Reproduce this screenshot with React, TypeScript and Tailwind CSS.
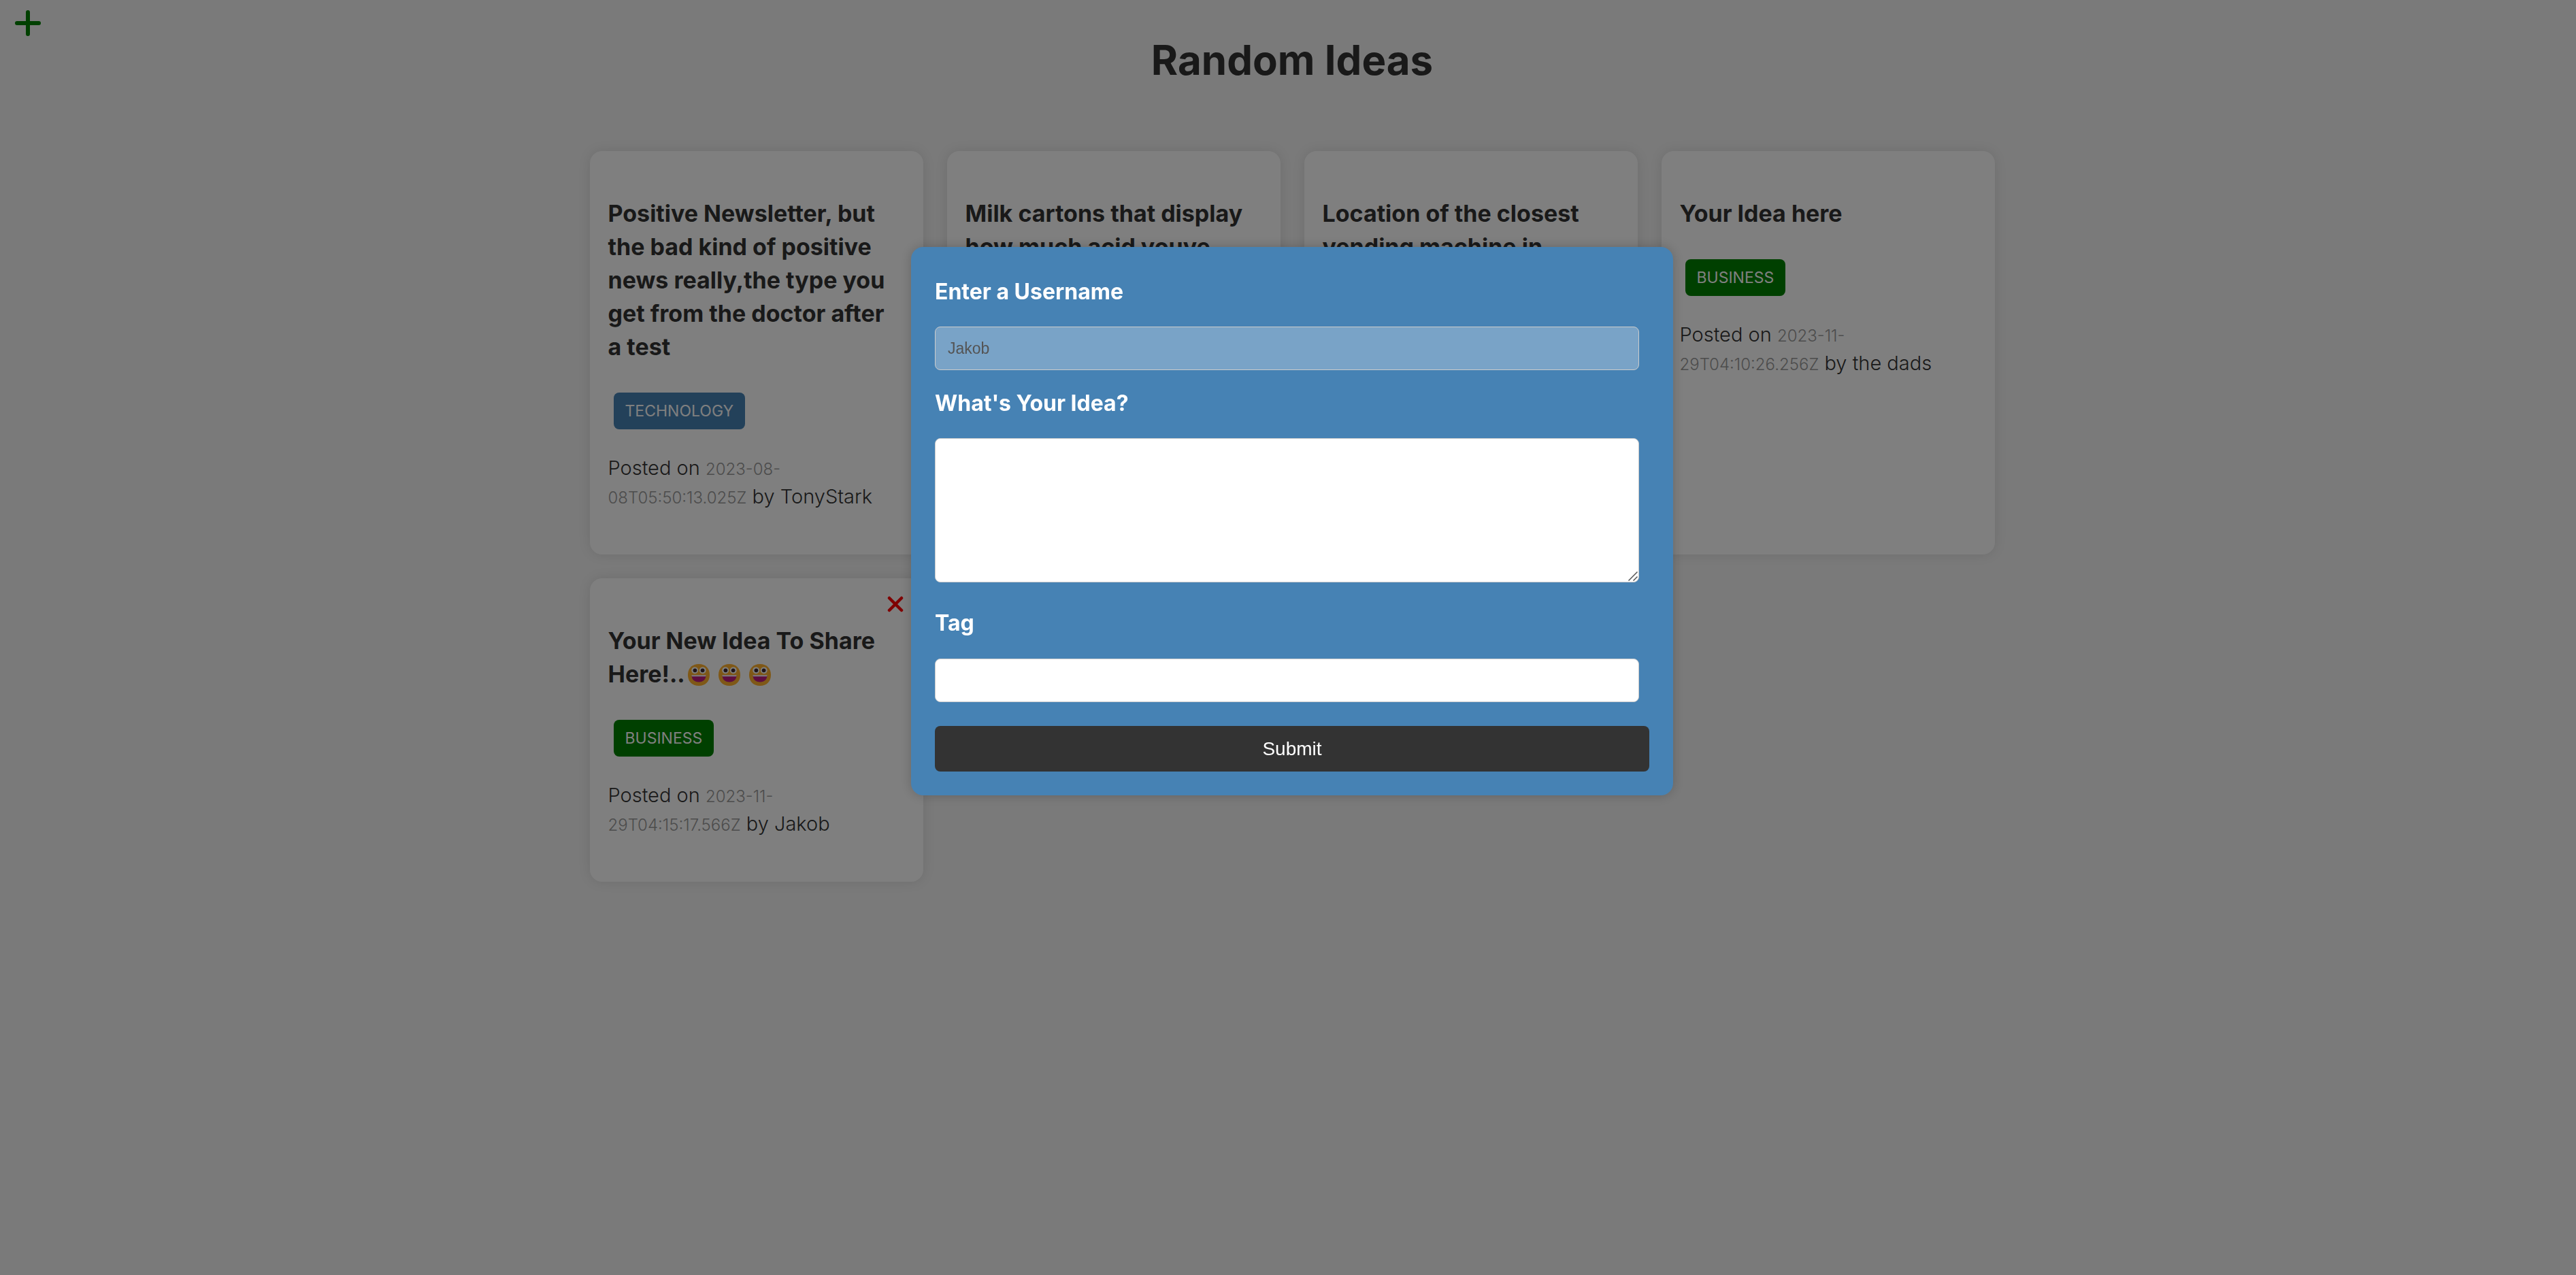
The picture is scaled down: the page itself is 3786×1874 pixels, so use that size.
import React from "react";

type Idea = {
  text: string;
  tag: "TECHNOLOGY" | "BUSINESS";
  date: string;
  username: string;
  smileys?: number;
  removable?: boolean;
};

const ideas: Idea[] = [
  {
    text: "Positive Newsletter, but the bad kind of positive news really,the type you get from the doctor after a test",
    tag: "TECHNOLOGY",
    date: "2023-08-08T05:50:13.025Z",
    username: "TonyStark",
  },
  {
    text: "Milk cartons that display how much acid youve",
    tag: "TECHNOLOGY",
    date: "2023-08-08T05:50:13.025Z",
    username: "SteveRogers",
  },
  {
    text: "Location of the closest vending machine in",
    tag: "TECHNOLOGY",
    date: "2023-08-08T05:50:13.025Z",
    username: "BruceBanner",
  },
  {
    text: "Your Idea here",
    tag: "BUSINESS",
    date: "2023-11-29T04:10:26.256Z",
    username: "the dads",
  },
  {
    text: "Your New Idea To Share Here!..",
    tag: "BUSINESS",
    date: "2023-11-29T04:15:17.566Z",
    username: "Jakob",
    smileys: 3,
    removable: true,
  },
];

const tagColors = {
  TECHNOLOGY: "bg-[#4682b4]",
  BUSINESS: "bg-[#008000]",
};

function Smiley() {
  return (
    <svg viewBox="0 0 32 32" className="mr-[13px] inline-block size-8 align-[-5px]" aria-hidden="true">
      <path d="M16 0C26 0 32 6.500 32 16s-6 16-16 16S0 25.500 0 16 6 0 16 0Z" fill="#ffb02e" />
      <circle cx="10.2" cy="9.3" r="4.9" fill="#fff" />
      <circle cx="21.8" cy="9.3" r="4.9" fill="#fff" />
      <circle cx="10.4" cy="9.3" r="2.9" fill="#402a32" />
      <circle cx="21.6" cy="9.3" r="2.9" fill="#402a32" />
      <path d="M5.500 16.500h21c0 5.800-3.700 10-10.500 10S5.500 22.300 5.500 16.500Z" fill="#bb1d80" />
      <path d="M5.500 16.200h21v1c0 .6-.4 1-1 1h-19c-.6 0-1-.4-1-1Z" fill="#fff" />
    </svg>
  );
}

function IdeaCard({ idea }: { idea: Idea }) {
  return (
    <article className="relative rounded-[18px] bg-white pt-[67px] pr-9 pb-16 pl-[27px] shadow-[0_0_18px_rgba(0,0,0,0.1)]">
      {idea.removable && (
        <button type="button" aria-label="Delete idea" className="absolute top-[26px] right-[29px]">
          <svg viewBox="0 0 24 24" className="size-6" stroke="#ff0000" strokeWidth="4.500" strokeLinecap="round">
            <path d="M3 3 21 21M21 3 3 21" />
          </svg>
        </button>
      )}
      <h3 className="text-[34px] leading-[49px] font-bold">
        {idea.text}
        {idea.smileys && (
          <span className="ml-1 whitespace-nowrap">
            {Array.from({ length: idea.smileys }, (_, i) => (
              <Smiley key={i} />
            ))}
          </span>
        )}
      </h3>
      <p
        className={`mt-[43px] ml-2 flex h-[54px] w-fit items-center rounded-lg px-[17px] text-[23px] text-white ${tagColors[idea.tag]}`}
      >
        {idea.tag}
      </p>
      <p className="mt-9 text-[29px] leading-[42px] font-light">
        Posted on <span className="text-[24px] leading-none text-[#999999]">{idea.date}</span> by {idea.username}
      </p>
    </article>
  );
}

const labelClass = "block text-[32px] leading-[48px] font-bold text-white";
const fieldClass =
  "block h-16 w-full rounded-lg border border-[#cccccc] px-[18px] font-['Liberation_Sans',sans-serif] text-[23px]";

function IdeaForm() {
  return (
    <form
      onSubmit={(e) => e.preventDefault()}
      className="w-full max-w-[1120px] rounded-[18px] bg-[#4682b4] px-[35px] pt-[42px] pb-[35px] shadow-[0_0_18px_rgba(0,0,0,0.2)]"
    >
      <div className="pr-[15px]">
        <label htmlFor="username" className={labelClass}>
          Enter a Username
        </label>
        <input
          id="username"
          disabled
          placeholder="Jakob"
          className={`mt-[27px] bg-[#79a3c7] placeholder:text-[#545454] ${fieldClass}`}
        />
        <label htmlFor="idea" className={`mt-[25px] ${labelClass}`}>
          What's Your Idea?
        </label>
        <div className="relative mt-[27px]">
          <textarea
            id="idea"
            className="block h-[212px] w-full resize-none rounded-lg border border-[#cccccc] bg-white p-[18px] font-['Liberation_Sans',sans-serif] text-[23px]"
          />
          <svg
            viewBox="0 0 14 14"
            className="pointer-events-none absolute right-[2px] bottom-[2px] size-[14px]"
            stroke="#555555"
            strokeWidth="1.500"
            aria-hidden="true"
          >
            <path d="M0.500 13.500 13.500 0.500M7.500 13.500 13.500 7.500" />
          </svg>
        </div>
        <label htmlFor="tag" className={`mt-9 ${labelClass}`}>
          Tag
        </label>
        <input id="tag" className={`mt-7 bg-white ${fieldClass}`} />
      </div>
      <button
        type="submit"
        className="mt-[35px] block h-[67px] w-full rounded-lg bg-[#333333] font-['Liberation_Sans',sans-serif] text-[28px] text-white"
      >
        Submit
      </button>
    </form>
  );
}

export default function App() {
  return (
    <div className="min-h-screen bg-[#f4f4f4] pl-3 font-['Inter',sans-serif] text-[#333333]">
      <button type="button" aria-label="Add idea" className="absolute top-[14px] left-[21px]">
        <svg viewBox="0 0 40 40" className="size-10" stroke="#008000" strokeWidth="6" strokeLinecap="round">
          <path d="M20 4V36M4 20H36" />
        </svg>
      </button>
      <header className="pt-[46px] text-center">
        <h1 className="text-[60px] leading-[84px] font-bold">Random Ideas</h1>
      </header>
      <main className="mx-auto mt-[92px] grid max-w-[2065px] grid-cols-4 gap-[35px]">
        {ideas.map((idea) => (
          <IdeaCard key={idea.text} idea={idea} />
        ))}
      </main>
      <div className="fixed inset-0 flex items-start justify-center bg-black/50 pt-[363px] pl-3">
        <IdeaForm />
      </div>
    </div>
  );
}
